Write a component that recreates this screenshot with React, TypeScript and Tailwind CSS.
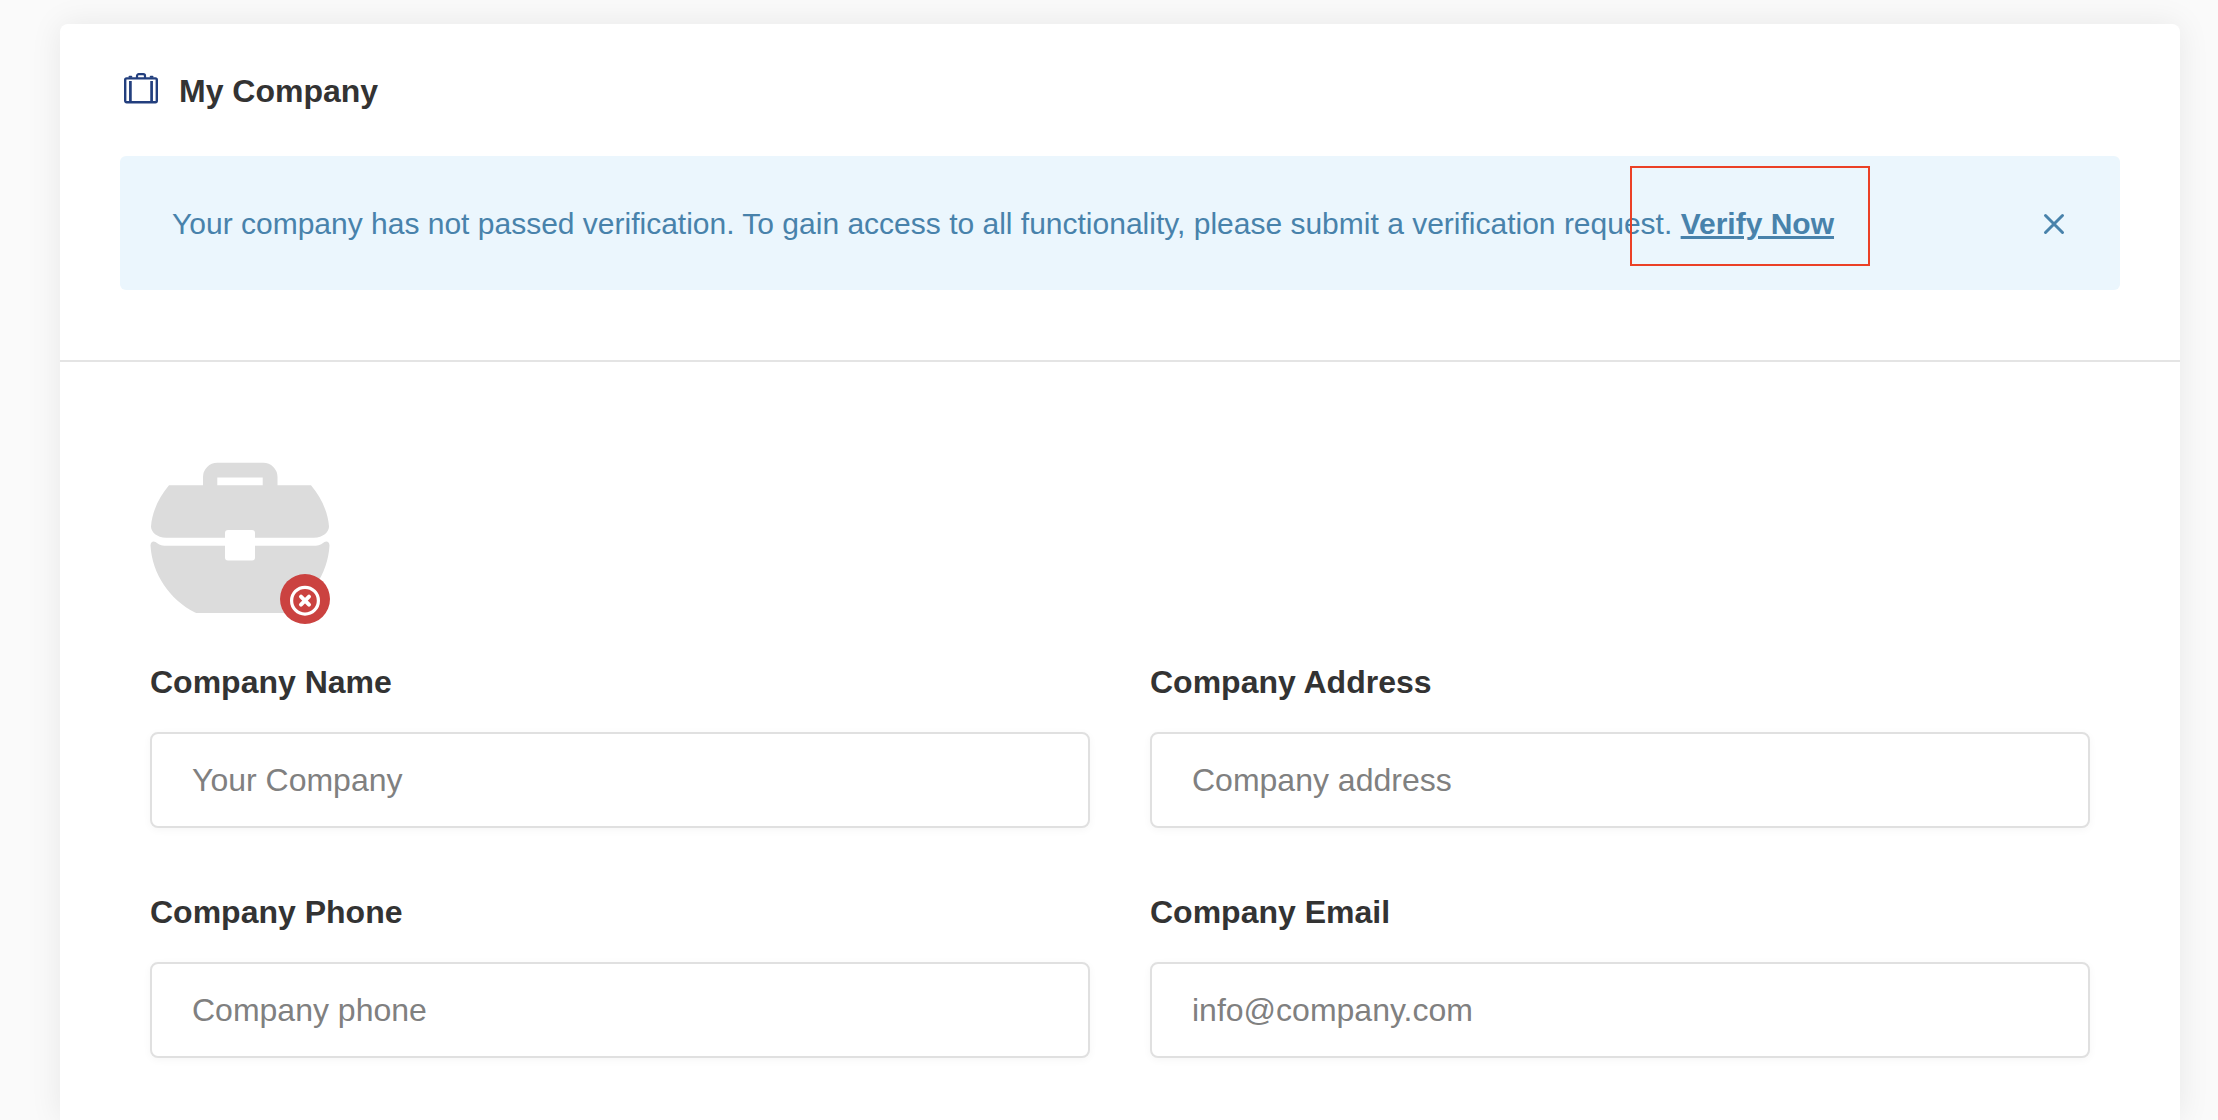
import { useState } from "react";

type FieldProps = { id: string; label: string; placeholder: string; type?: string };

function Field({ id, label, placeholder, type = "text" }: FieldProps) {
  return (
    <div className="flex flex-col gap-[30px]">
      <label htmlFor={id} className="text-[32px] leading-10 font-bold text-[#333333]">
        {label}
      </label>
      <input
        id={id}
        type={type}
        placeholder={placeholder}
        className="h-24 w-full rounded-lg border-2 border-[#e0e0e0] bg-white px-10 text-[32px] text-[#333333] shadow-[0_2px_8px_rgba(0,0,0,0.04)] placeholder:text-[#808080] placeholder:opacity-100 focus:outline-none"
      />
    </div>
  );
}

function SuitcaseIcon() {
  return (
    <svg className="size-9" viewBox="0 0 36 36" fill="none" stroke="#233f7e" aria-hidden="true">
      <rect x="2.2" y="5.4" width="31.6" height="23.8" rx="1.4" strokeWidth="2.4" />
      <path d="M7.400 8v21.200M28.600 8v21.200" strokeWidth="2.7" />
      <path d="M6.500 3.700h1.800M27.700 3.700h1.800" strokeWidth="2" strokeLinecap="round" />
      <path d="M14 5V2.900A1.700 1.700 0 0 1 15.700 1.200h4.600A1.700 1.700 0 0 1 22 2.900V5" strokeWidth="2.2" />
    </svg>
  );
}

function BriefcasePicture() {
  return (
    <svg className="block h-[152px] w-[180px]" viewBox="0 0 180 152" aria-hidden="true">
      <g fill="#dcdcdc">
        <path
          fillRule="evenodd"
          d="M19 23.3H53V15A14.3 14.3 0 0 1 67.3.7H113.2A14.3 14.3 0 0 1 127.5 15V23.3H161C171 35 178 50 179 64.5C179 70 173 75.7 164 75.7H105V71A3 3 0 0 0 102 68H78A3 3 0 0 0 75 71V75.7H16C7 75.7 1 70 1 64.5C2 50 9 35 19 23.3ZM67.3 15.5V23.3H112.7V15.5Z"
        />
        <path d="M.5 83.5C.5 79.5 3.500 78.800 5.500 80C8.500 82.300 11 83.700 16 83.700H75V95.500A3 3 0 0 0 78 98.500H102A3 3 0 0 0 105 95.500V83.700H164C169 83.700 171.500 82.300 174.500 80C176.500 78.800 179.500 79.500 179.500 83.500C178 112 160 138 135 150.500Q134 151 132 151H48Q46 151 45 150.500C20 138 2 112 .5 83.500Z" />
      </g>
    </svg>
  );
}

export default function App() {
  const [open, setOpen] = useState(true);

  return (
    <div className="flex min-h-screen flex-col bg-[#fafafa] pt-6 pr-[38px] pl-[60px] font-['Liberation_Sans',Arial,sans-serif]">
      <main className="flex-1 rounded-t-lg bg-white shadow-[0_0_32px_rgba(0,0,0,0.08)]">
        <header className="border-b-2 border-[#e4e4e4] px-[60px] pt-[47px] pb-[70px]">
          <div className="flex items-center gap-5 pl-[3px]">
            <SuitcaseIcon />
            <h1 className="text-[32px] leading-10 font-bold text-[#333333]">My Company</h1>
          </div>
          {open && (
            <div
              role="alert"
              className="mt-[45px] flex items-center justify-between rounded-md bg-[#ebf6fd] pt-[50px] pr-[50px] pb-12 pl-[52px] text-[30px] leading-9 text-[#4882ab]"
            >
              <p>
                Your company has not passed verification. To gain access to all functionality, please submit a
                verification request.{" "}
                <span className="relative inline-block">
                  <a href="#verify" className="font-bold underline decoration-[3px] underline-offset-2">
                    Verify Now
                  </a>
                  <span className="pointer-events-none absolute -top-10 -right-9 -bottom-6 -left-[51px] border-2 border-[#eb4026]" />
                </span>
              </p>
              <button type="button" aria-label="Dismiss" onClick={() => setOpen(false)} className="p-1">
                <svg className="block size-6" viewBox="0 0 24 24" fill="none" stroke="currentColor" strokeWidth="3" strokeLinecap="round">
                  <path d="M3.500 3.500 20.500 20.500M20.500 3.500 3.500 20.500" />
                </svg>
              </button>
            </div>
          )}
        </header>

        <form className="px-[90px] pt-[100px] pb-[60px]">
          <div className="relative mb-12 w-[180px]">
            <BriefcasePicture />
            <button
              type="button"
              aria-label="Remove logo"
              className="absolute right-0 -bottom-[10px] rounded-full bg-[#cb4240]"
            >
              <svg className="block size-[50px]" viewBox="0 0 50 50" fill="none" stroke="#ffffff" strokeLinecap="round">
                <circle cx="25" cy="26.700" r="13.400" strokeWidth="3.200" />
                <path d="M21 22.700 29 30.700M29 22.700 21 30.700" strokeWidth="4" />
              </svg>
            </button>
          </div>
          <div className="grid grid-cols-2 gap-x-[60px] gap-y-16">
            <Field id="company-name" label="Company Name" placeholder="Your Company" />
            <Field id="company-address" label="Company Address" placeholder="Company address" />
            <Field id="company-phone" label="Company Phone" placeholder="Company phone" type="tel" />
            <Field id="company-email" label="Company Email" placeholder="info@company.com" type="email" />
          </div>
        </form>
      </main>
    </div>
  );
}
